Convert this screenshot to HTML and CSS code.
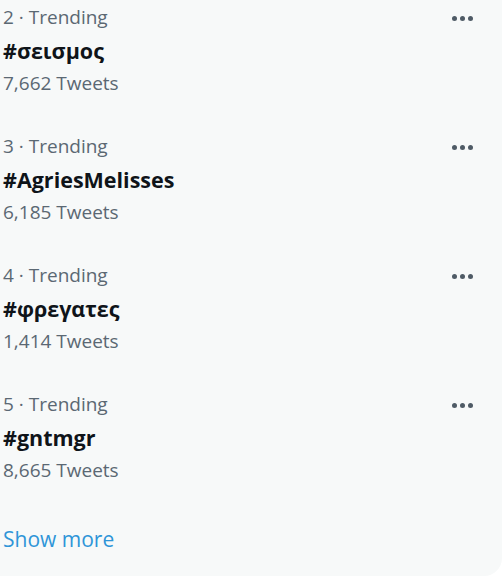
FILE: index.html
```html
<!DOCTYPE html>
<html lang="en">
<head>
    <meta charset="UTF-8">
    <title>Trends</title>
    <link rel="stylesheet" href="styles.css">
</head>
<body>
    <div class="trends-card">
        <div class="trend">
            <div class="trend-meta">2 · Trending</div>
            <div class="trend-name">#σεισμος</div>
            <div class="trend-count">7,662 Tweets</div>
            <button class="more-button" aria-label="More"><span></span><span></span><span></span></button>
        </div>
        <div class="trend">
            <div class="trend-meta">3 · Trending</div>
            <div class="trend-name">#AgriesMelisses</div>
            <div class="trend-count">6,185 Tweets</div>
            <button class="more-button" aria-label="More"><span></span><span></span><span></span></button>
        </div>
        <div class="trend">
            <div class="trend-meta">4 · Trending</div>
            <div class="trend-name">#φρεγατες</div>
            <div class="trend-count">1,414 Tweets</div>
            <button class="more-button" aria-label="More"><span></span><span></span><span></span></button>
        </div>
        <div class="trend">
            <div class="trend-meta">5 · Trending</div>
            <div class="trend-name">#gntmgr</div>
            <div class="trend-count">8,665 Tweets</div>
            <button class="more-button" aria-label="More"><span></span><span></span><span></span></button>
        </div>
        <a class="show-more" href="#">Show more</a>
    </div>
</body>
</html>
```

FILE: styles.css
```css
/* Global */
body {
    margin: 0;
    background-color: #ffffff;
    font-family: "Open Sans", "Liberation Sans", Arial, sans-serif;
}

/* Trends card */
.trends-card {
    width: 502px;
    height: 576px;
    background-color: #f7f9f9;
    border-bottom-right-radius: 18px;
    box-sizing: border-box;
    padding-left: 3px;
}

.trend {
    position: relative;
    height: 129px;
    padding-top: 1px;
    box-sizing: border-box;
}

.trend-meta,
.trend-count {
    height: 33px;
    line-height: 33px;
    font-size: 19px;
    color: #5b6873;
}

.trend-name {
    height: 33px;
    line-height: 33px;
    font-size: 21.5px;
    font-weight: bold;
    color: #0f1419;
}

/* three-dot menu, sits over the row */
.more-button {
    position: absolute;
    top: 10px;
    right: 29px;
    display: flex;
    gap: 3px;
    padding: 6px 0;
    border: none;
    background: none;
    cursor: pointer;
}

.more-button span {
    width: 5px;
    height: 5px;
    border-radius: 50%;
    background-color: #4f5b66;
}

.show-more {
    display: block;
    margin-top: 7px;
    height: 33px;
    line-height: 33px;
    font-size: 21px;
    color: #2e95d8;
    text-decoration: none;
}
```
